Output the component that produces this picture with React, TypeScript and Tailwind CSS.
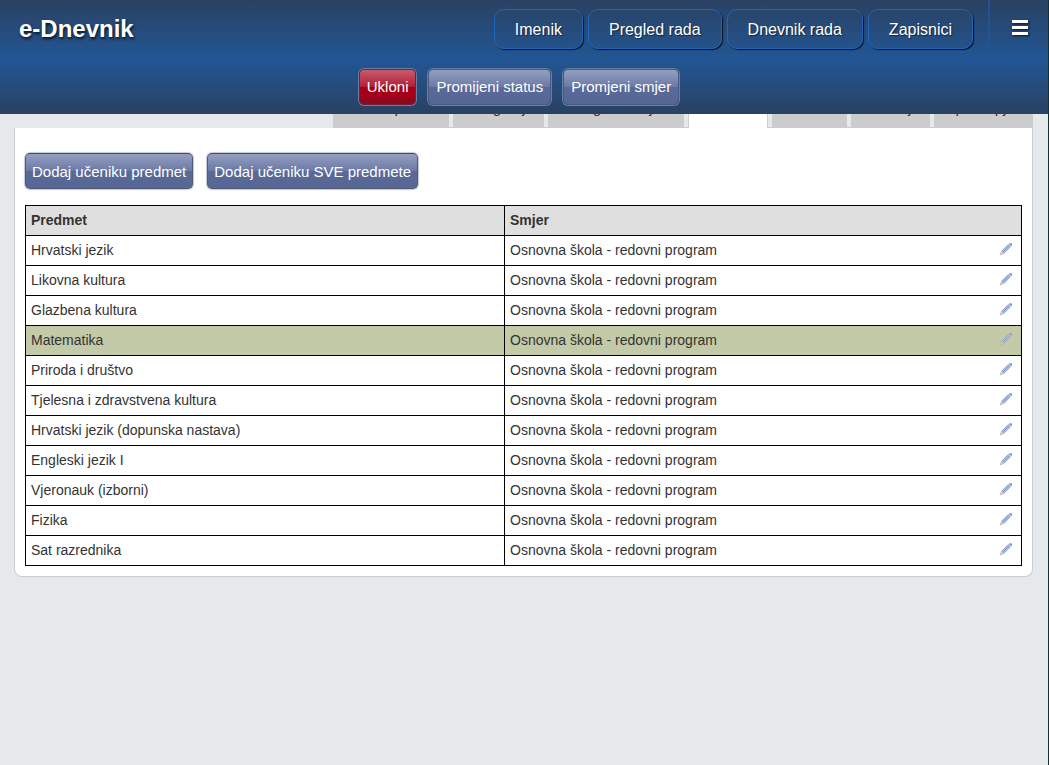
import React from 'react'
import clsx from 'clsx'

const NAV_ITEMS = ['Imenik', 'Pregled rada', 'Dnevnik rada', 'Zapisnici']

const TABS = [
  'Osobni podaci',
  'Fotografija',
  'Pedagoške mjere',
  'Predmeti',
  'Nastava',
  'Vladanje',
  'Opći uspjeh'
]
const ACTIVE_TAB = 'Predmeti'

const PROGRAM = 'Osnovna škola - redovni program'

const SUBJECTS: Array<{ name: string; program: string; highlighted?: boolean }> = [
  { name: 'Hrvatski jezik', program: PROGRAM },
  { name: 'Likovna kultura', program: PROGRAM },
  { name: 'Glazbena kultura', program: PROGRAM },
  { name: 'Matematika', program: PROGRAM, highlighted: true },
  { name: 'Priroda i društvo', program: PROGRAM },
  { name: 'Tjelesna i zdravstvena kultura', program: PROGRAM },
  { name: 'Hrvatski jezik (dopunska nastava)', program: PROGRAM },
  { name: 'Engleski jezik I', program: PROGRAM },
  { name: 'Vjeronauk (izborni)', program: PROGRAM },
  { name: 'Fizika', program: PROGRAM },
  { name: 'Sat razrednika', program: PROGRAM }
]

function PencilIcon() {
  return (
    <svg width="14" height="14" viewBox="0 0 14 14" fill="none" aria-hidden="true">
      <path d="M2.6 9.2 9.2 2.6 11.4 4.8 4.8 11.4Z" fill="#aebfe4" />
      <path d="M2.6 9.2 9.4 2.4M4.8 11.4 11.6 4.6" stroke="#8c9ac4" strokeWidth="0.9" />
      <path d="M3.9 10.1 10.3 3.7" stroke="#7c9ad6" strokeWidth="0.9" />
      <path d="M9.4 2.4 10.6 1.2H12.4L13 1.8V3.4L11.6 4.6Z" fill="#8795b8" />
      <path d="M10.2 2.4 11.8 4" stroke="#e6e9f2" strokeWidth="0.8" />
      <path d="M2.6 9.2 4.8 11.4 1 13Z" fill="#e6cac6" stroke="#aaa3b8" strokeWidth="0.6" />
    </svg>
  )
}

type GlossyButtonProps = {
  children: React.ReactNode
  tone?: 'blue' | 'red'
  place: 'header' | 'page'
}

function GlossyButton({ children, tone = 'blue', place }: GlossyButtonProps) {
  return (
    <button
      type="button"
      className={clsx(
        'h-9 rounded-[5px] border text-[15px] leading-5 text-white',
        tone === 'red'
          ? 'border-[#7c1c35] bg-[linear-gradient(#c75c6b,#b11f36_49%,#a50018_50%,#a50018_75%,#7d0f20)]'
          : 'bg-[linear-gradient(#94a0c0,#6b79a6_49%,#596a98_50%,#566795)]',
        tone === 'blue' && (place === 'header' ? 'border-[#4b5b80]' : 'border-[#4e597c] border-t-[#454a60]'),
        place === 'header'
          ? 'px-[7px] shadow-[0_0_0_1px_#6480a6]'
          : 'px-[6px] pt-[2px] shadow-[0_0_1px_1px_#c3c8d3]'
      )}
    >
      {children}
    </button>
  )
}

function Header() {
  return (
    <header className="sticky top-0 z-10 h-[114px] bg-[linear-gradient(#2a4162,#225694_52%,#2a4162)]">
      <div className="flex h-[60px] items-start">
        <h1 className="flex-1 pl-[19px] pt-[13px] text-2xl leading-8 font-bold text-white [text-shadow:1px_2px_3px_#0a1424]">
          e-Dnevnik
        </h1>
        <nav className="flex gap-[5px] pt-[9px] pr-[15px]">
          {NAV_ITEMS.map(item => (
            <a
              key={item}
              href="#"
              className="rounded-[10px] border border-[#1f66bb] px-5 pt-2 pb-[6px] text-base leading-6 text-white shadow-[1px_1px_1px_#050d1c] [text-shadow:1px_1px_1px_#14243c]"
            >
              {item}
            </a>
          ))}
        </nav>
        <div className="flex h-full w-[60px] items-start justify-center border-l-2 border-[#215496] pt-5">
          <button type="button" aria-label="Izbornik" className="flex flex-col gap-[3px] pl-[2px] drop-shadow-[1px_1px_1px_#0a1424]">
            <span className="h-[3px] w-4 bg-white" />
            <span className="h-[3px] w-4 bg-white" />
            <span className="h-[3px] w-4 bg-white" />
          </button>
        </div>
      </div>
      <div className="flex justify-center gap-3 pt-[9px] pr-[10px]">
        <GlossyButton place="header" tone="red">Ukloni</GlossyButton>
        <GlossyButton place="header">Promijeni status</GlossyButton>
        <GlossyButton place="header">Promjeni smjer</GlossyButton>
      </div>
    </header>
  )
}

// The tab strip is scrolled most of the way under the sticky header
function Tabs() {
  return (
    <nav className="-mt-[18px] flex justify-end">
      <div className="flex gap-1 border-b border-[#ccc]">
        {TABS.map(tab => (
          <a
            key={tab}
            href="#"
            aria-current={tab === ACTIVE_TAB ? 'page' : undefined}
            className={clsx(
              'pt-[2px] pb-[9px] text-[15px] leading-5 text-[#333]',
              tab === ACTIVE_TAB ? '-mb-px border-x border-[#ccc] bg-white px-[9px]' : 'bg-[#ccc] px-[10px]'
            )}
          >
            {tab}
          </a>
        ))}
      </div>
    </nav>
  )
}

function SubjectsTable() {
  return (
    <table className="mt-4 w-full table-fixed border-collapse text-left text-sm text-[#333]">
      <thead>
        <tr className="h-[30px] bg-[#dfdfdf]">
          <th className="w-[479px] border border-black px-[5px] pb-[2px] font-bold">Predmet</th>
          <th className="border border-black px-[5px] pb-[2px] font-bold">Smjer</th>
        </tr>
      </thead>
      <tbody>
        {SUBJECTS.map(({ name, program, highlighted }) => (
          <tr key={name} className={clsx('h-[30px]', highlighted && 'bg-[#c3caa8]')}>
            <td className="border border-black px-[5px] pb-[2px]">{name}</td>
            <td className="border border-black px-[5px] pb-[2px]">
              <div className="flex items-center justify-between pr-[3px]">
                {program}
                <button type="button" aria-label={`Uredi ${name}`} className={clsx('pb-[2px]', highlighted && 'opacity-80')}>
                  <PencilIcon />
                </button>
              </div>
            </td>
          </tr>
        ))}
      </tbody>
    </table>
  )
}

export default function App() {
  return (
    <div className="min-h-screen border-r border-[#14302f] bg-[#e5e9ec] font-['Liberation_Sans',Arial,sans-serif]">
      <Header />
      <main className="pr-[15px] pl-[14px]">
        <Tabs />
        <section className="rounded-b-lg border border-t-0 border-[#ccc] bg-white px-[10px] pt-[25px] pb-[10px]">
          <div className="flex gap-[14px]">
            <GlossyButton place="page">Dodaj učeniku predmet</GlossyButton>
            <GlossyButton place="page">Dodaj učeniku SVE predmete</GlossyButton>
          </div>
          <SubjectsTable />
        </section>
      </main>
    </div>
  )
}
